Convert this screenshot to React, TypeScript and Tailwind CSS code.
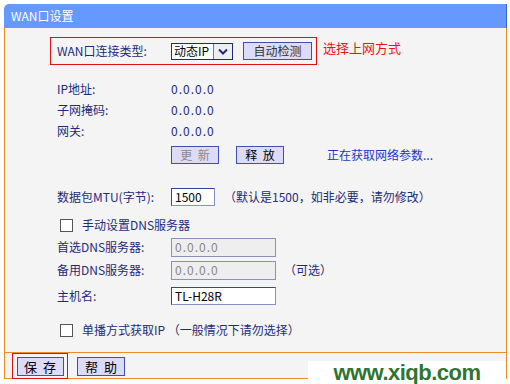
import React from 'react';

// WAN port settings panel (router admin page)

const font = { fontFamily: '"Noto Sans CJK SC", "Liberation Sans", sans-serif' };

function Row({ h, mt, label, children }: { h: string; mt: string; label?: string; children?: React.ReactNode }) {
  return (
    <div className={`flex items-center whitespace-nowrap pl-[52px] ${h} ${mt}`}>
      {label !== undefined && <span className="w-[114px] shrink-0">{label}</span>}
      {children}
    </div>
  );
}

function Btn({ children, className = '' }: { children: React.ReactNode; className?: string }) {
  return (
    <button
      type="button"
      className={`flex h-[18px] shrink-0 items-center justify-center whitespace-nowrap border border-[#3d4fb0] bg-[#dcdcf8] text-[12px] leading-none ${className}`}
    >
      {children}
    </button>
  );
}

function Check() {
  return <span className="ml-[3px] mr-[9px] inline-block h-[13px] w-[13px] shrink-0 border border-[#555] bg-white" />;
}

export default function App() {
  return (
    <div className="h-[384px] w-[510px] bg-white pt-[4px] pl-[4px] text-[12px] text-[#1f2b7a]" style={font}>
      <div className="w-[503px]">
        {/* Title bar */}
        <div className="flex h-[24px] items-center rounded-tl-[5px] border-r border-[#3366cc] bg-[#6699ff] pl-[7px] text-[12px] text-white">
          WAN口设置
        </div>

        {/* Body */}
        <div className="h-[325px] border-x border-b border-[#f08a24] bg-[#f4f4f4] pt-[9px]">
          <div className="flex items-start whitespace-nowrap">
            <div className="ml-[45px] flex h-[28px] w-[267px] items-center border border-[#e01010] pl-[6px]">
              <span className="w-[114px] shrink-0">WAN口连接类型:</span>
              <div className="flex h-[17px] w-[62px] items-center border border-[#1f2b7a] bg-white">
                <span className="flex-1 pl-[2px] leading-none text-black">动态IP</span>
                <span className="flex h-full w-[19px] items-center justify-center border-l border-[#777] bg-[#eeeeee]">
                  <svg width="10" height="7" viewBox="0 0 10 7">
                    <path d="M1 1.5 L5 5.5 L9 1.5" fill="none" stroke="#1f2b7a" strokeWidth="2" />
                  </svg>
                </span>
              </div>
              <Btn className="ml-[10px] h-[17px] w-[69px] text-[#333]">自动检测</Btn>
            </div>
            <span className="ml-[6px] mt-[1px] text-[13px] leading-[20px] text-[#ee1111]">选择上网方式</span>
          </div>

          <Row h="h-[21px]" mt="mt-[13px]" label="IP地址:">
            <span className="tracking-[1px]">0.0.0.0</span>
          </Row>
          <Row h="h-[21px]" mt="mt-0" label="子网掩码:">
            <span className="tracking-[1px]">0.0.0.0</span>
          </Row>
          <Row h="h-[22px]" mt="mt-0" label="网关:">
            <span className="tracking-[1px]">0.0.0.0</span>
          </Row>
          <Row h="h-[18px]" mt="mt-[4px]" label="">
            <Btn className="w-[48px] text-[#888]">更&nbsp;&nbsp;新</Btn>
            <Btn className="ml-[17px] w-[48px] text-black">释&nbsp;&nbsp;放</Btn>
            <span className="ml-[43px] text-[#2233cc]">正在获取网络参数...</span>
          </Row>

          <Row h="h-[22px]" mt="mt-[22px]" label="数据包MTU(字节):">
            <span className="flex h-[18px] w-[44px] items-center border border-[#33449a] border-r-[#8890c0] border-b-[#8890c0] bg-white pl-[3px] text-black">
              1500
            </span>
            <span className="ml-[9px]">（默认是1500，如非必要，请勿修改）</span>
          </Row>
          <Row h="h-[20px]" mt="mt-[7px]">
            <Check />
            <span>手动设置DNS服务器</span>
          </Row>
          <Row h="h-[22px]" mt="mt-[1px]" label="首选DNS服务器:">
            <span className="flex h-[19px] w-[105px] items-center border border-[#8890c0] bg-[#eeeeee] pl-[3px] tracking-[1px] text-[#888]">
              0.0.0.0
            </span>
          </Row>
          <Row h="h-[22px]" mt="mt-[1px]" label="备用DNS服务器:">
            <span className="flex h-[19px] w-[105px] items-center border border-[#8890c0] bg-[#eeeeee] pl-[3px] tracking-[1px] text-[#888]">
              0.0.0.0
            </span>
            <span className="ml-[8px]">（可选）</span>
          </Row>
          <Row h="h-[22px]" mt="mt-[4px]" label="主机名:">
            <span className="flex h-[18px] w-[105px] items-center border border-[#33449a] border-r-[#8890c0] border-b-[#8890c0] bg-white pl-[3px] text-black">
              TL-H28R
            </span>
          </Row>
          <Row h="h-[22px]" mt="mt-[12px]">
            <Check />
            <span>单播方式获取IP （一般情况下请勿选择）</span>
          </Row>
        </div>

        {/* Footer */}
        <div className="flex h-[26px] items-start border-x border-b border-[#f08a24] bg-[#f4f4f4]">
          <div className="ml-[7px] flex h-[26px] w-[56px] shrink-0 items-center justify-center border border-[#e01010]">
            <Btn className="h-[19px] w-[47px] text-[13px] text-black">保&nbsp;&nbsp;存</Btn>
          </div>
          <Btn className="ml-[9px] mt-[4px] h-[19px] w-[48px] text-[13px] text-black">帮&nbsp;&nbsp;助</Btn>
          <div className="ml-auto mt-[8px] flex h-[23px] w-[198px] items-center justify-center bg-white">
            <span
              className="text-[22px] font-bold leading-none tracking-[-0.5px] text-[#2f7430]"
              style={{ fontFamily: '"Liberation Sans", Arial, sans-serif' }}
            >
              www.xiqb.com
            </span>
          </div>
        </div>
      </div>
    </div>
  );
}
